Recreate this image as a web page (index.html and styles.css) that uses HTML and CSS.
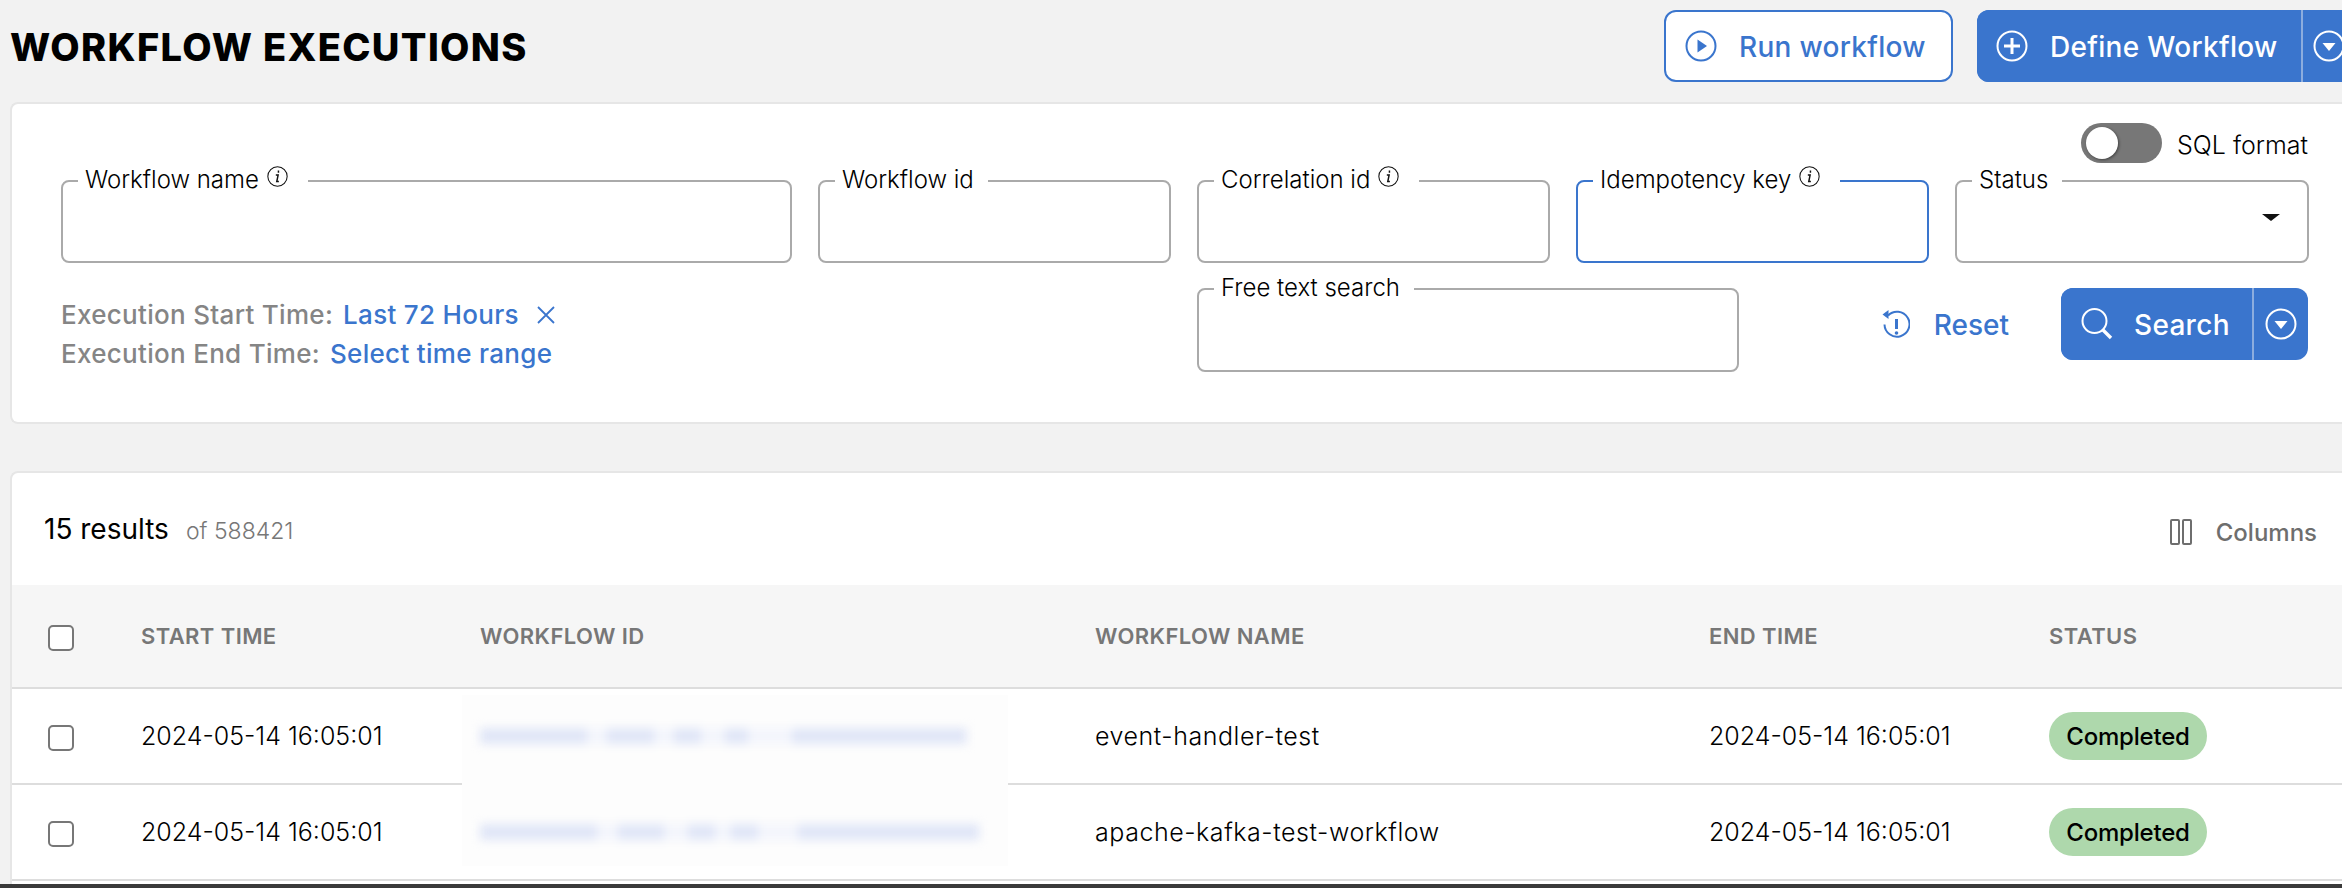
FILE: index.html
```html
<!DOCTYPE html>
<html lang="en">
<head>
<meta charset="utf-8">
<title>Workflow Executions</title>
<link rel="stylesheet" href="styles.css">
</head>
<body>
<div class="page">
  <header class="topbar">
    <h1 class="title">WORKFLOW EXECUTIONS</h1>
    <div class="top-actions">
      <button class="btn btn-outline">
        <svg class="ic30" viewBox="0 0 32 32"><circle cx="16" cy="16" r="14.5" fill="none" stroke="currentColor" stroke-width="2"/><path d="M12.5 9.5 L22 16 L12.5 22.5Z" fill="currentColor"/></svg>
        <span>Run workflow</span>
      </button>
      <div class="split split-define">
        <button class="btn btn-main btn-define">
          <svg class="ic30" viewBox="0 0 32 32"><circle cx="16" cy="16" r="14.5" fill="none" stroke="currentColor" stroke-width="2"/><path d="M16 8v16M8 16h16" fill="none" stroke="currentColor" stroke-width="3"/></svg>
          <span>Define Workflow</span>
        </button>
        <button class="btn-drop">
          <svg class="ic30" viewBox="0 0 32 32"><circle cx="16" cy="16" r="14.5" fill="none" stroke="currentColor" stroke-width="2"/><path d="M9.5 13h13L16 21Z" fill="currentColor"/></svg>
        </button>
      </div>
    </div>
  </header>

  <section class="card filters">
    <div class="sql-row">
      <span class="switch"><span class="thumb"></span></span>
      <span class="sql-label">SQL format</span>
    </div>
    <div class="field-row">
      <div class="field field-name">
        <span class="legend legend-info">Workflow name
          <svg class="info" viewBox="0 0 20 20"><circle cx="10" cy="10" r="9.2" fill="none" stroke="currentColor" stroke-width="1"/><path d="M10.9 4.4v2M8.4 8.6h2.2l-1.3 6.2h2" fill="none" stroke="currentColor" stroke-width="1.4"/></svg>
        </span>
      </div>
      <div class="field"><span class="legend">Workflow id</span></div>
      <div class="field">
        <span class="legend legend-info">Correlation id
          <svg class="info" viewBox="0 0 20 20"><circle cx="10" cy="10" r="9.2" fill="none" stroke="currentColor" stroke-width="1"/><path d="M10.9 4.4v2M8.4 8.6h2.2l-1.3 6.2h2" fill="none" stroke="currentColor" stroke-width="1.4"/></svg>
        </span>
      </div>
      <div class="field field-focus">
        <span class="legend legend-info">Idempotency key
          <svg class="info" viewBox="0 0 20 20"><circle cx="10" cy="10" r="9.2" fill="none" stroke="currentColor" stroke-width="1"/><path d="M10.9 4.4v2M8.4 8.6h2.2l-1.3 6.2h2" fill="none" stroke="currentColor" stroke-width="1.4"/></svg>
        </span>
      </div>
      <div class="field field-select">
        <span class="legend">Status</span>
        <span class="caret"></span>
      </div>
    </div>
    <div class="second-row">
      <div class="times">
        <div class="time-line">
          <span class="time-label">Execution Start Time:</span>
          <a class="time-link">Last 72 Hours</a>
          <svg class="close" viewBox="0 0 20 20"><path d="M2 2l16 16M18 2L2 18" fill="none" stroke="currentColor" stroke-width="1.8"/></svg>
        </div>
        <div class="time-line">
          <span class="time-label">Execution End Time:</span>
          <a class="time-link">Select time range</a>
        </div>
      </div>
      <div class="field field-free"><span class="legend">Free text search</span></div>
      <div class="search-actions">
        <button class="reset">
          <svg class="ic-reset" viewBox="0 0 28 32"><path d="M6 6.5 A12.5 12.5 0 1 1 2.5 15.5" fill="none" stroke="currentColor" stroke-width="2"/><path d="M0.5 5.5 L6.5 1 V10Z" fill="currentColor"/><path d="M14.5 10v10" stroke="currentColor" stroke-width="3" fill="none"/><circle cx="14.5" cy="24" r="1.8" fill="currentColor"/></svg>
          <span>Reset</span>
        </button>
        <div class="split split-search">
          <button class="btn btn-main btn-search">
            <svg class="ic-search" viewBox="0 0 32 32"><circle cx="13.5" cy="13" r="12" fill="none" stroke="currentColor" stroke-width="2"/><path d="M22 22l8 8" stroke="currentColor" stroke-width="3.4" fill="none"/></svg>
            <span>Search</span>
          </button>
          <button class="btn-drop">
            <svg class="ic30" viewBox="0 0 32 32"><circle cx="16" cy="16" r="14.5" fill="none" stroke="currentColor" stroke-width="2"/><path d="M9.5 13h13L16 21Z" fill="currentColor"/></svg>
          </button>
        </div>
      </div>
    </div>
  </section>

  <section class="card results">
    <div class="results-head">
      <div class="counts"><span class="count">15 results</span><span class="of">of 588421</span></div>
      <div class="columns">
        <svg class="ic-cols" viewBox="0 0 22 26"><rect x="1" y="1" width="8" height="24" rx="1" fill="none" stroke="currentColor" stroke-width="2"/><rect x="13" y="1" width="8" height="24" rx="1" fill="none" stroke="currentColor" stroke-width="2"/></svg>
        <span>Columns</span>
      </div>
    </div>
    <div class="table-wrap">
      <div class="patch"></div>
      <table class="grid">
        <colgroup><col class="c0"><col class="c1"><col class="c2"><col class="c3"><col class="c4"><col class="c5"></colgroup>
        <thead>
          <tr>
            <th><span class="check"></span></th>
            <th>START TIME</th>
            <th>WORKFLOW ID</th>
            <th>WORKFLOW NAME</th>
            <th>END TIME</th>
            <th>STATUS</th>
          </tr>
        </thead>
        <tbody>
          <tr>
            <td><span class="check"></span></td>
            <td>2024-05-14 16:05:01</td>
            <td><div class="blurred"><i class="s1a"></i><i class="s1b"></i><i class="s1c"></i><i class="s1d"></i><i class="s1e"></i></div></td>
            <td class="name">event-handler-test</td>
            <td>2024-05-14 16:05:01</td>
            <td><span class="badge">Completed</span></td>
          </tr>
          <tr>
            <td><span class="check"></span></td>
            <td>2024-05-14 16:05:01</td>
            <td><div class="blurred blurred-2"><i class="s2a"></i><i class="s2b"></i><i class="s2c"></i><i class="s2d"></i><i class="s2e"></i></div></td>
            <td class="name">apache-kafka-test-workflow</td>
            <td>2024-05-14 16:05:01</td>
            <td><span class="badge">Completed</span></td>
          </tr>
        </tbody>
      </table>
    </div>
  </section>
</div>
<div class="edge"></div>
</body>
</html>
```
FILE: styles.css
```css
* { box-sizing: border-box; }
html, body { margin: 0; height: 888px; overflow: hidden; background: #f2f2f2; }
body { font-family: Inter, "Noto Sans", sans-serif; color: #000; }
.page { width: 2372px; padding-left: 10px; height: 888px; overflow: hidden; }
button { font: inherit; border: 0; background: none; padding: 0; color: inherit; }

.topbar { height: 102px; display: flex; align-items: flex-start; justify-content: space-between; padding-top: 10px; }
.title { margin: 0; font-size: 38px; line-height: 74px; font-weight: 800; letter-spacing: 1.35px; }
.top-actions { display: flex; gap: 24px; }
.btn { height: 72px; border-radius: 12px; display: flex; align-items: center; font-size: 28px; font-weight: 500; letter-spacing: .3px; }
.btn span { padding-top: 2px; }
.btn-outline { width: 289px; background: #fff; border: 2px solid #3a75cd; color: #3a75cd; padding-left: 19px; gap: 22px; }
.btn-main { background: #3a75cd; color: #fff; }
.ic30 { width: 32px; height: 32px; flex: none; }
.split { display: flex; height: 72px; background: #3a75cd; border-radius: 12px; color: #fff; }
.split-define { width: 395px; }
.btn-define { width: 326px; padding-left: 19px; gap: 22px; border-right: 2px solid #8cadde; border-radius: 12px 0 0 12px; }
.btn-drop { width: 54px; display: flex; align-items: center; justify-content: center; }
.split-define .btn-drop { width: 51px; }

.card { background: #fff; border: 2px solid #e6e6e6; border-right: 0; border-radius: 8px 0 0 8px; }
.filters { height: 322px; padding: 19px 0 0 49px; }
.sql-row { width: 2247px; height: 40px; display: flex; justify-content: flex-end; align-items: center; gap: 15px; }
.switch { width: 81px; height: 40px; border-radius: 20px; background: #777; padding: 4px 0 0 5px; display: block; }
.thumb { display: block; width: 32px; height: 32px; border-radius: 50%; background: #fff; box-shadow: 1px 1px 3px rgba(0,0,0,.45); }
.sql-label { font-size: 25px; font-weight: 300; width: 131px; white-space: nowrap; padding-top: 3px; }

.field-row { margin-top: 17px; display: grid; grid-template-columns: 731px 353px 353px 353px 354px; column-gap: 26px; width: 2247px; }
.field { position: relative; height: 83px; background: #fff; border: 2px solid #aaa; border-radius: 8px; }
.field-focus { border-color: #3a75cd; }
.legend { position: absolute; top: -14px; left: 15px; height: 24px; line-height: 24px; background: #fff; padding: 0 14px 0 7px; font-size: 24px; font-weight: 300; white-space: nowrap; display: flex; align-items: center; }
.legend-info { padding-right: 20px; }
.info { width: 21px; height: 21px; margin: -8px 0 0 8px; color: #111; flex: none; }
.caret { position: absolute; right: 27px; top: 32px; width: 0; height: 0; border-left: 9px solid transparent; border-right: 9px solid transparent; border-top: 7px solid #111; }

.second-row { margin-top: 25px; width: 2247px; display: flex; align-items: flex-start; }
.times { width: 1136px; padding-top: 7px; }
.time-line { display: flex; align-items: center; height: 39px; font-size: 26px; letter-spacing: .3px; }
.time-label { color: #858585; font-weight: 500; margin-right: 10px; }
.time-link { color: #3a75cd; font-weight: 500; }
.close { width: 20px; height: 20px; color: #3a75cd; margin-left: 17px; }
.field-free { width: 542px; height: 84px; flex: none; }
.search-actions { flex: 1; display: flex; justify-content: flex-end; align-items: center; }
.reset { display: flex; align-items: center; gap: 24px; color: #3a75cd; font-size: 28px; font-weight: 500; margin-right: 52px; margin-top: 2px; }
.ic-reset { width: 28px; height: 32px; }
.split-search { width: 247px; margin-left: 0; }
.btn-search { width: 193px; padding-left: 20px; gap: 21px; border-right: 2px solid #8cadde; border-radius: 12px 0 0 12px; }
.ic-search { width: 32px; height: 32px; flex: none; }

.results { margin-top: 47px; padding: 0; height: 500px; }
.results-head { height: 112px; width: 2305px; padding-left: 32px; display: flex; justify-content: space-between; align-items: center; }
.counts { display: flex; align-items: baseline; gap: 17px; margin-top: -1px; }
.count { font-size: 28px; font-weight: 400; }
.of { font-size: 23px; font-weight: 300; color: #777; }
.columns { display: flex; align-items: center; gap: 24px; color: #6e6e6e; font-size: 24px; font-weight: 500; margin-top: 6px; }
.ic-cols { width: 22px; height: 26px; }

.table-wrap { position: relative; }
.patch { position: absolute; left: 450px; top: 110px; width: 546px; height: 171px; background: #fdfdfd; z-index: 1; }
.grid { width: 2360px; border-collapse: separate; border-spacing: 0; table-layout: fixed; }
.c0 { width: 129px; } .c1 { width: 339px; } .c2 { width: 615px; } .c3 { width: 614px; } .c4 { width: 340px; } .c5 { width: 323px; }
th { height: 104px; background: #f6f6f6; border-bottom: 2px solid #ddd; padding: 0 0 1px; text-align: left; color: #777; font-size: 22px; font-weight: 600; letter-spacing: .4px; }
td { height: 96px; border-bottom: 2px solid #ddd; padding: 0; font-size: 25px; font-weight: 300; }
.name { letter-spacing: .55px; }
th:first-child, td:first-child { padding: 3px 0 0 36px; }
.check { display: block; width: 26px; height: 26px; border: 2px solid #777; border-radius: 5px; background: #fff; }
.blurred { position: relative; z-index: 2; display: flex; height: 16px; width: 488px; background: #f3f5fc; filter: blur(5px); }
.blurred-2 { width: 500px; }
.blurred i { display: block; height: 16px; background: #e0e6f7; }
.s1a { width: 107px; } .s1b { width: 47px; margin-left: 20px; } .s1c { width: 27px; margin-left: 20px; } .s1d { width: 23px; margin-left: 24px; } .s1e { width: 174px; margin-left: 44px; }
.s2a { width: 117px; } .s2b { width: 46px; margin-left: 21px; } .s2c { width: 27px; margin-left: 24px; } .s2d { width: 27px; margin-left: 16px; } .s2e { width: 181px; margin-left: 40px; }
.badge { display: inline-flex; align-items: center; justify-content: center; width: 158px; height: 48px; border-radius: 24px; background: #aed8ac; font-size: 24px; font-weight: 500; letter-spacing: -.2px; }

.edge { position: fixed; left: 0; right: 0; bottom: 0; height: 4px; background: #3a3a3a; }
```
